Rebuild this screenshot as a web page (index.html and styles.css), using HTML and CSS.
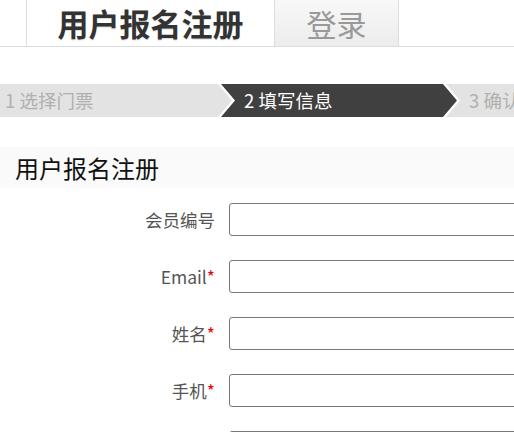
FILE: index.html
```html
<!DOCTYPE html>
<html lang="zh-CN">
<head>
    <meta charset="UTF-8">
    <meta name="viewport" content="width=device-width, initial-scale=1.0">
    <title>用户报名注册</title>
    <link rel="stylesheet" href="styles.css">
</head>
<body>

    <!-- Top Tabs -->
    <div class="tabs">
        <div class="tab tab-active">用户报名注册</div>
        <div class="tab tab-login">登录</div>
    </div>

    <!-- Steps -->
    <div class="steps">
        <div class="step step-first">1 选择门票</div>
        <div class="step step-current">2 填写信息</div>
        <div class="step step-last">3 确认订单</div>
    </div>

    <!-- Section Title -->
    <h2 class="section-title">用户报名注册</h2>

    <!-- Form -->
    <form class="reg-form">
        <div class="form-row">
            <label class="form-label">会员编号</label>
            <input class="form-input" type="text">
        </div>
        <div class="form-row">
            <label class="form-label">Email<span class="req">*</span></label>
            <input class="form-input" type="text">
        </div>
        <div class="form-row">
            <label class="form-label">姓名<span class="req">*</span></label>
            <input class="form-input" type="text">
        </div>
        <div class="form-row">
            <label class="form-label">手机<span class="req">*</span></label>
            <input class="form-input" type="text">
        </div>
        <div class="form-row">
            <label class="form-label"></label>
            <input class="form-input" type="text">
        </div>
    </form>

</body>
</html>
```

FILE: styles.css
```css
/* General */
html {
    overflow: hidden;
}

body {
    margin: 0;
    width: 1000px;
    font-family: "Noto Sans CJK SC", "Noto Sans", sans-serif;
    background-color: white;
}

/* Top Tabs */
.tabs {
    display: flex;
    height: 46px;
    padding-left: 26px;
    border-bottom: 1px solid #ddd;
}

.tab {
    height: 46px;
    line-height: 46px;
    font-size: 30px;
    text-align: center;
}

.tab-active {
    width: 247px;
    border-left: 1px solid #ddd;
    font-weight: bold;
    font-size: 31px;
    color: #333;
    text-shadow: 0 1px 1px rgba(0, 0, 0, 0.15);
}

.tab-login {
    width: 123px;
    border-left: 1px solid #ddd;
    border-right: 1px solid #ddd;
    background: linear-gradient(#f8f8f8, #ececec);
    color: #999;
}

/* Steps */
.steps {
    display: flex;
    margin-top: 37px;
    height: 33px;
}

.step {
    height: 33px;
    line-height: 33px;
    font-size: 18.5px;
    padding-left: 23px;
    box-sizing: border-box;
    background-color: #e3e3e3;
    color: #b0b0b0;
    margin-left: -11px;
    clip-path: polygon(0 0, calc(100% - 14px) 0, 100% 50%, calc(100% - 14px) 100%, 0 100%, 14px 50%);
}

.step-first {
    width: 232px;
    margin-left: 0;
    padding-left: 5px;
    clip-path: polygon(0 0, calc(100% - 14px) 0, 100% 50%, calc(100% - 14px) 100%, 0 100%);
}

.step-current {
    width: 236px;
    background-color: #404040;
    color: white;
}

.step-last {
    width: 240px;
}

/* Section Title */
.section-title {
    margin: 30px 0 0;
    height: 41px;
    line-height: 41px;
    padding-left: 15px;
    background-color: #fafafa;
    font-size: 24px;
    font-weight: normal;
    color: #111;
}

/* Form */
.reg-form {
    display: flex;
    flex-direction: column;
    gap: 24px;
    margin-top: 15px;
}

.form-row {
    display: flex;
    align-items: center;
    gap: 14px;
}

.form-label {
    width: 215px;
    text-align: right;
    font-size: 17.5px;
    color: #555;
}

.req {
    color: #e00;
}

.form-input {
    width: 320px;
    height: 33px;
    box-sizing: border-box;
    border: 1px solid #777;
    border-radius: 3px;
    margin: 0;
}
```
